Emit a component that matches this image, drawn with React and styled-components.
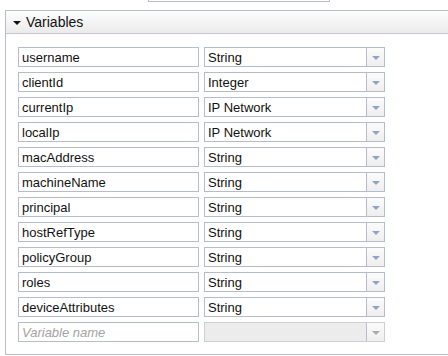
import styled, { createGlobalStyle } from "styled-components";

const Global = createGlobalStyle`
    body {
        margin: 0;
        background: #fff;
        font-family: "Liberation Sans", Arial, sans-serif;
        overflow: hidden;
    }
`;

const Page = styled.div`
    width: 448px;
    height: 356px;
    overflow: hidden;
`;

const TopStub = styled.div`
    margin-left: 148px;
    width: 180px;
    height: 1px;
    border: 1px solid #b9bdc6;
    border-top: none;
`;

const Panel = styled.section`
    margin: 8px 0 0 5px;
    width: 470px;
    border: 1px solid #b9bdc8;
`;

const Header = styled.div`
    display: flex;
    align-items: center;
    gap: 5px;
    height: 22px;
    padding-left: 7px;
    border-bottom: 1px solid #c3c6ce;
    background: linear-gradient(#fdfdfd, #ebebeb);
    font-size: 14px;
    color: #111;
`;

const Caret = styled.span`
    width: 0;
    height: 0;
    border-left: 4px solid transparent;
    border-right: 4px solid transparent;
    border-top: 4px solid #111;
    margin-top: 1px;
`;

const Body = styled.div`
    padding: 13px 12px 12px;
    display: grid;
    grid-template-columns: 181px 181px;
    column-gap: 5px;
    row-gap: 5px;
`;

const Field = styled.div`
    box-sizing: border-box;
    height: 20px;
    border: 1px solid #b5bccb;
    padding: 0 3px;
    display: flex;
    align-items: center;
    font-size: 13px;
    color: ${p => (p.placeholder ? "#a3a3a3" : "#111")};
    font-style: ${p => (p.placeholder ? "italic" : "normal")};
    white-space: nowrap;
`;

const Select = styled.div`
    box-sizing: border-box;
    height: 20px;
    border: 1px solid ${p => (p.disabled ? "#cfcfcf" : "#b5bccb")};
    background: ${p => (p.disabled ? "#ececec" : "#fff")};
    display: flex;
    font-size: 13px;
    color: #111;
`;

const SelectText = styled.div`
    flex: 1;
    display: flex;
    align-items: center;
    padding-left: 3px;
`;

const Arrow = styled.div`
    width: 17px;
    border-left: 1px solid ${p => (p.disabled ? "#b5bccb" : "#b5bccb")};
    background: linear-gradient(#fbfbfb, #eeeeee);
    display: flex;
    align-items: center;
    justify-content: center;
    &::after {
        content: "";
        width: 0;
        height: 0;
        border-left: 4px solid transparent;
        border-right: 4px solid transparent;
        border-top: 4px solid ${p => (p.disabled ? "#a9a9a9" : "#8fa3c6")};
        margin-top: 1px;
    }
`;

const vars = [
    ["username", "String"],
    ["clientId", "Integer"],
    ["currentIp", "IP Network"],
    ["localIp", "IP Network"],
    ["macAddress", "String"],
    ["machineName", "String"],
    ["principal", "String"],
    ["hostRefType", "String"],
    ["policyGroup", "String"],
    ["roles", "String"],
    ["deviceAttributes", "String"],
];

export default function App() {
    return <Page>
        <Global />
        <TopStub />
        <Panel>
            <Header><Caret />Variables</Header>
            <Body>
                {vars.map(([name, type]) => [
                    <Field key={name + "-n"}>{name}</Field>,
                    <Select key={name + "-t"}>
                        <SelectText>{type}</SelectText>
                        <Arrow />
                    </Select>,
                ])}
                <Field placeholder>Variable name</Field>
                <Select disabled>
                    <SelectText />
                    <Arrow disabled />
                </Select>
            </Body>
        </Panel>
    </Page>
}
